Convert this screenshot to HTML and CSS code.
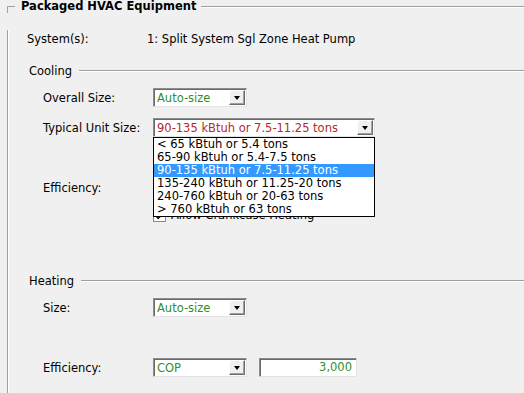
FILE: index.html
```html
<!DOCTYPE html>
<html lang="en">
<head>
  <meta charset="UTF-8">
  <title>Packaged HVAC Equipment</title>
  <link rel="stylesheet" href="styles.css">
</head>
<body>
  <div class="group-head">
    <span class="corner"></span>
    <span class="group-title">Packaged HVAC Equipment</span>
    <span class="rule"></span>
  </div>
  <div class="group-body">
    <div class="system-row">
      <span class="system-label">System(s):</span>
      <span class="system-value">1: Split System Sgl Zone Heat Pump</span>
    </div>

    <div class="section-head first">
      <span>Cooling</span>
      <span class="rule"></span>
    </div>
    <div class="field gap-s">
      <span class="label">Overall Size:</span>
      <div class="combo short ok">Auto-size<span class="arrow"></span></div>
    </div>
    <div class="field gap-m">
      <span class="label">Typical Unit Size:</span>
      <div class="combo wide warn">90-135 kBtuh or 7.5-11.25 tons<span class="arrow"></span>
        <!-- open dropdown list -->
        <ul class="drop-list">
          <li>&lt; 65 kBtuh or 5.4 tons</li>
          <li>65-90 kBtuh or 5.4-7.5 tons</li>
          <li class="selected">90-135 kBtuh or 7.5-11.25 tons</li>
          <li>135-240 kBtuh or 11.25-20 tons</li>
          <li>240-760 kBtuh or 20-63 tons</li>
          <li>&gt; 760 kBtuh or 63 tons</li>
        </ul>
      </div>
    </div>
    <div class="field gap-l">
      <span class="label">Efficiency:</span>
    </div>
    <div class="check-row">
      <svg class="check" width="13" height="13" viewBox="0 0 13 13">
        <rect x="0.5" y="0.5" width="12" height="12" fill="#fff" stroke="#8a8a8a"/>
        <path d="M3 6 L5 8.5 L10 3.5 L10 5.5 L5 10.5 L3 8 Z" fill="#000"/>
      </svg>
      <span>Allow Crankcase Heating</span>
    </div>

    <div class="section-head second">
      <span>Heating</span>
      <span class="rule"></span>
    </div>
    <div class="field gap-s">
      <span class="label">Size:</span>
      <div class="combo short ok">Auto-size<span class="arrow"></span></div>
    </div>
    <div class="field gap-l">
      <span class="label">Efficiency:</span>
      <div class="combo short ok">COP<span class="arrow"></span></div>
      <div class="num-box">3,000</div>
    </div>
  </div>
</body>
</html>
```

FILE: styles.css
```css
* {
  box-sizing: border-box;
  margin: 0;
  padding: 0;
}
html, body {
  height: 100%;
  overflow: hidden;
}
body {
  font-family: 'DejaVu Sans', Verdana, sans-serif;
  font-size: 11.5px;
  color: #000;
  background-color: #f0f0f0;
}

/* outer group box */
.group-head {
  display: flex;
  align-items: center;
  height: 13px;
  margin-left: 7px;
}
.corner {
  align-self: flex-end;
  width: 8px;
  height: 7px;
  border-top: 1px solid #a0a0a0;
  border-left: 1px solid #a0a0a0;
}
.group-title {
  font-weight: bold;
  padding: 0 5px 0 6px;
  line-height: 13px;
}
.rule {
  flex-grow: 1;
  height: 2px;
  border-top: 1px solid #a0a0a0;
  border-bottom: 1px solid #ffffff;
}
.group-body {
  margin-left: 7px;
  height: 380px;
  border-left: 1px solid #a0a0a0;
  box-shadow: inset 1px 0 0 #ffffff;
  padding-left: 19px;
}

.system-row {
  display: flex;
  align-items: center;
  height: 18px;
  margin-top: 17px;
}
.system-label {
  width: 120px;
}

.section-head {
  display: flex;
  align-items: center;
  height: 16px;
  padding-left: 2px;
}
.section-head .rule {
  margin-left: 7px;
}
.section-head.first {
  margin-top: 15px;
}
.section-head.second {
  margin-top: 51px;
}

.field {
  display: flex;
  align-items: center;
  height: 19px;
  padding-left: 16px;
}
.field .label {
  width: 110px;
}
.gap-s { margin-top: 9px; }
.gap-m { margin-top: 11px; }
.gap-l { margin-top: 41px; }

/* combo boxes */
.combo {
  position: relative;
  display: flex;
  align-items: center;
  height: 19px;
  padding-left: 3px;
  background-color: #ffffff;
  border: 1px solid #e3e3e3;
  border-top-color: #8c8c8c;
  border-left-color: #8c8c8c;
  box-shadow: inset 1px 1px 0 #6a6a6a;
  white-space: nowrap;
}
.combo.short { width: 94px; }
.combo.wide { width: 222px; }
.combo.ok { color: #2f8f2f; }
.combo.warn { color: #b42a2a; }

.arrow {
  position: absolute;
  right: 1px;
  top: 1px;
  width: 16px;
  height: 15px;
  background-color: #f0f0f0;
  border: 1px solid #6a6a6a;
  border-top-color: #ffffff;
  border-left-color: #ffffff;
  box-shadow: inset -1px -1px 0 #a0a0a0;
}
.arrow::after {
  content: '';
  position: absolute;
  left: 4px;
  top: 5px;
  border-left: 3px solid transparent;
  border-right: 3px solid transparent;
  border-top: 4px solid #000;
}

.num-box {
  width: 98px;
  height: 19px;
  margin-left: 12px;
  padding-right: 4px;
  line-height: 17px;
  text-align: right;
  color: #2f8f2f;
  background-color: #ffffff;
  border: 1px solid #e3e3e3;
  border-top-color: #8c8c8c;
  border-left-color: #8c8c8c;
  box-shadow: inset 1px 1px 0 #6a6a6a;
}

/* the open list sits over the rows below */
.drop-list {
  position: absolute;
  top: 18px;
  left: -1px;
  width: 222px;
  list-style: none;
  background-color: #ffffff;
  border: 1px solid #000000;
  color: #000;
  z-index: 5;
}
.drop-list li {
  height: 13px;
  line-height: 13px;
  padding-left: 3px;
}
.drop-list li.selected {
  background-color: #3399ff;
  color: #ffffff;
}

.check-row {
  display: flex;
  align-items: center;
  height: 14px;
  margin-top: 11px;
  padding-left: 126px;
}
.check {
  margin-right: 5px;
}
```
